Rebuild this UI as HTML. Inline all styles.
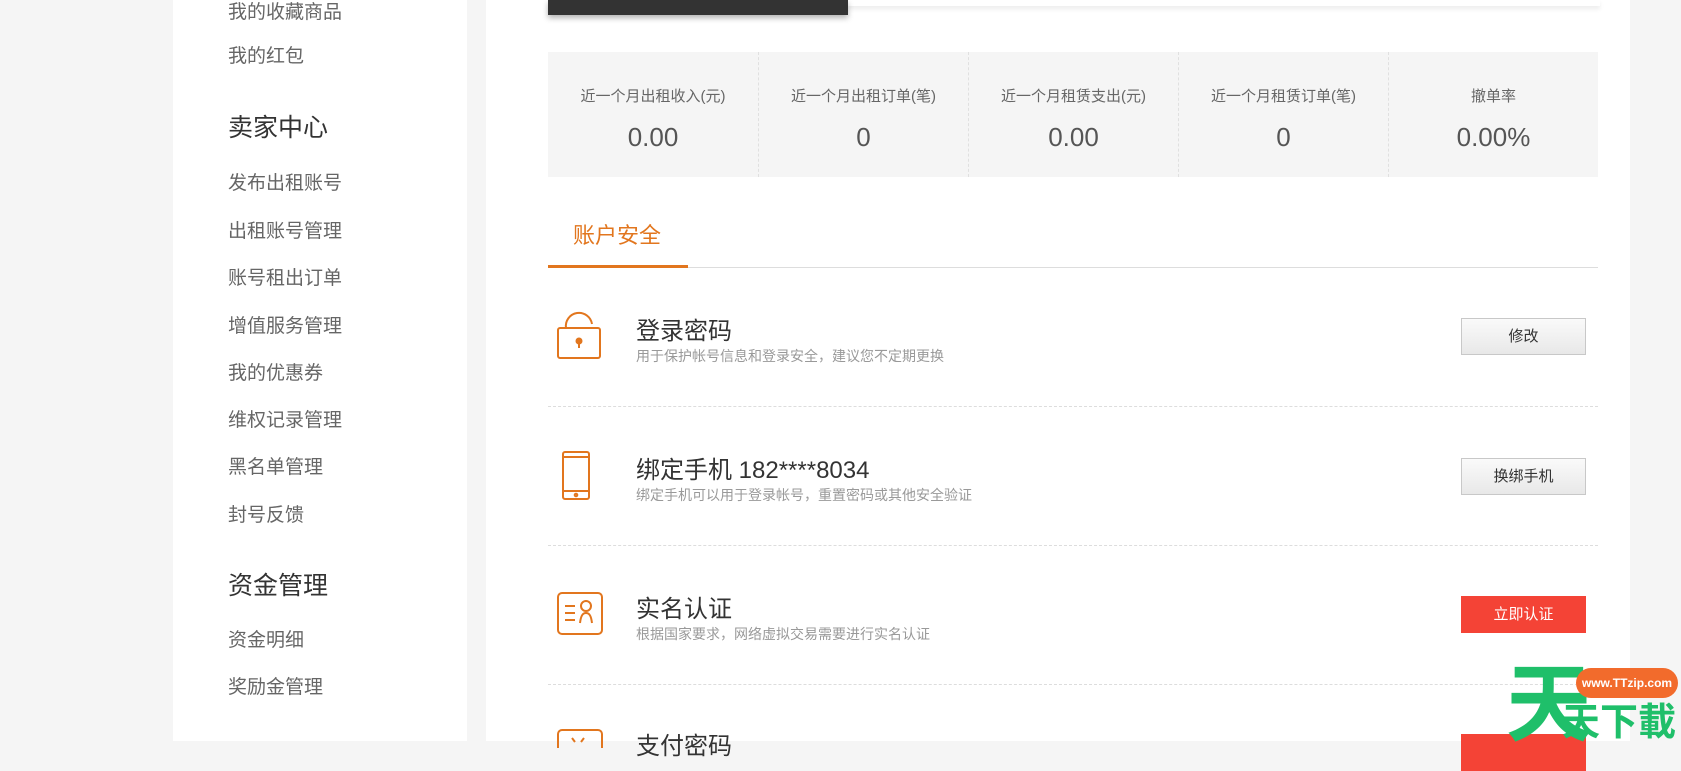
<!DOCTYPE html>
<html><head><meta charset="utf-8"><style>
*{margin:0;padding:0;box-sizing:border-box}
body{width:1681px;height:741px;overflow:hidden;background:#f5f5f5;font-family:"Liberation Sans","Noto Sans CJK SC",sans-serif;position:relative}
.abs{position:absolute;white-space:nowrap}
.side{position:absolute;left:173px;top:0;width:294px;height:741px;background:#fff}
.side .it{position:absolute;left:55px;font-size:19px;color:#666;line-height:24px}
.side .h{position:absolute;left:55px;font-size:25px;color:#333;line-height:30px}
.main{position:absolute;left:486px;top:0;width:1144px;height:741px;background:#fff}
.stats{position:absolute;left:548px;top:52px;width:1050px;height:125px;background:#f5f5f5}
.st{position:absolute;top:0;width:210px;height:125px;text-align:center}
.st .l{margin-top:33px;font-size:15px;color:#666}
.st .v{margin-top:16px;font-size:26px;color:#555}
.st+.st{border-left:1px dashed #e0e0e0}
.row-t{font-size:24px;color:#333}
.row-d{font-size:14px;color:#999}
.btn{position:absolute;left:1461px;width:125px;height:37px;border:1px solid #c8c8c8;background:linear-gradient(#fafafa,#e8e8e8);font-size:15px;color:#333;text-align:center;line-height:35px}
.btn.r{background:#f44336;border-color:#f44336;color:#fff}
.sep{position:absolute;left:548px;width:1050px;border-top:1px dashed #ddd}
</style></head><body>
<div class="side">
<div class="it" style="top:1px">我的收藏商品</div>
<div class="it" style="top:45px">我的红包</div>
<div class="h" style="top:113px">卖家中心</div>
<div class="it" style="top:172px">发布出租账号</div>
<div class="it" style="top:220px">出租账号管理</div>
<div class="it" style="top:267px">账号租出订单</div>
<div class="it" style="top:315px">增值服务管理</div>
<div class="it" style="top:362px">我的优惠券</div>
<div class="it" style="top:409px">维权记录管理</div>
<div class="it" style="top:456px">黑名单管理</div>
<div class="it" style="top:504px">封号反馈</div>
<div class="h" style="top:571px">资金管理</div>
<div class="it" style="top:629px">资金明细</div>
<div class="it" style="top:676px">奖励金管理</div>
</div>
<div class="main"></div>
<div class="abs" style="left:548px;top:0;width:300px;height:15px;background:#333;box-shadow:0 3px 6px rgba(0,0,0,.3)"></div>
<div class="abs" style="left:848px;top:0;width:752px;height:6px;box-shadow:0 3px 5px rgba(0,0,0,.08)"></div>
<div class="stats">
<div class="st" style="left:0"><div class="l">近一个月出租收入(元)</div><div class="v">0.00</div></div>
<div class="st" style="left:210px"><div class="l">近一个月出租订单(笔)</div><div class="v">0</div></div>
<div class="st" style="left:420px"><div class="l">近一个月租赁支出(元)</div><div class="v">0.00</div></div>
<div class="st" style="left:630px"><div class="l">近一个月租赁订单(笔)</div><div class="v">0</div></div>
<div class="st" style="left:840px"><div class="l">撤单率</div><div class="v">0.00%</div></div>
</div>
<div class="abs" style="left:573px;top:218px;font-size:22px;color:#e2761e">账户安全</div>
<div class="abs" style="left:548px;top:267px;width:1050px;height:1px;background:#ddd"></div>
<div class="abs" style="left:548px;top:265px;width:140px;height:3px;background:#e2761e"></div>

<svg class="abs" style="left:556px;top:310px" width="48" height="52" viewBox="0 0 48 52" fill="none" stroke="#e2761e" stroke-width="2"><path d="M10 18 A13 13 0 0 1 36 14"/><rect x="2" y="18" width="42" height="30" rx="2"/><circle cx="23" cy="31" r="2.5" fill="#e2761e"/><path d="M23 33v5"/></svg>
<div class="abs row-t" style="left:636px;top:311px">登录密码</div>
<div class="abs row-d" style="left:636px;top:346px">用于保护帐号信息和登录安全，建议您不定期更换</div>
<div class="btn" style="top:318px">修改</div>
<div class="sep" style="top:406px"></div>

<svg class="abs" style="left:561px;top:450px" width="30" height="52" viewBox="0 0 30 52" fill="none" stroke="#e2761e" stroke-width="2"><rect x="2" y="2" width="26" height="47" rx="2"/><path d="M2 7h26M2 41h26"/><circle cx="15" cy="45" r="1.3"/></svg>
<div class="abs row-t" style="left:636px;top:450px">绑定手机 182****8034</div>
<div class="abs row-d" style="left:636px;top:485px">绑定手机可以用于登录帐号，重置密码或其他安全验证</div>
<div class="btn" style="top:458px">换绑手机</div>
<div class="sep" style="top:545px"></div>

<svg class="abs" style="left:556px;top:591px" width="48" height="45" viewBox="0 0 48 45" fill="none" stroke="#e2761e" stroke-width="2"><rect x="2" y="2" width="44" height="41" rx="4"/><path d="M9 15h10M9 22h10M9 29h10M24 32c1-8 3-10 6-10s5 2 6 10"/><circle cx="30" cy="15" r="5"/></svg>
<div class="abs row-t" style="left:636px;top:589px">实名认证</div>
<div class="abs row-d" style="left:636px;top:624px">根据国家要求，网络虚拟交易需要进行实名认证</div>
<div class="btn r" style="top:596px">立即认证</div>
<div class="sep" style="top:684px"></div>

<svg class="abs" style="left:556px;top:728px" width="48" height="20" viewBox="0 0 48 20" fill="none" stroke="#e2761e" stroke-width="2"><rect x="2" y="2" width="44" height="30" rx="4"/><path d="M16 10l3 4M28 10l-3 4"/></svg>
<div class="abs row-t" style="left:636px;top:726px">支付密码</div>
<div class="btn r" style="top:734px"></div>

<div class="abs" style="left:1506px;top:662px;font-size:86px;font-weight:bold;color:#1fbf6a;line-height:86px">天</div>
<div class="abs" style="left:1576px;top:668px;width:102px;height:30px;border-radius:15px;background:#f26b2c;color:#fff;font-size:12px;font-weight:bold;text-align:center;line-height:30px">www.TTzip.com</div>
<div class="abs" style="left:1562px;top:703px;font-size:38px;font-weight:bold;color:#1fbf6a;line-height:40px">天下載</div>
</body></html>
